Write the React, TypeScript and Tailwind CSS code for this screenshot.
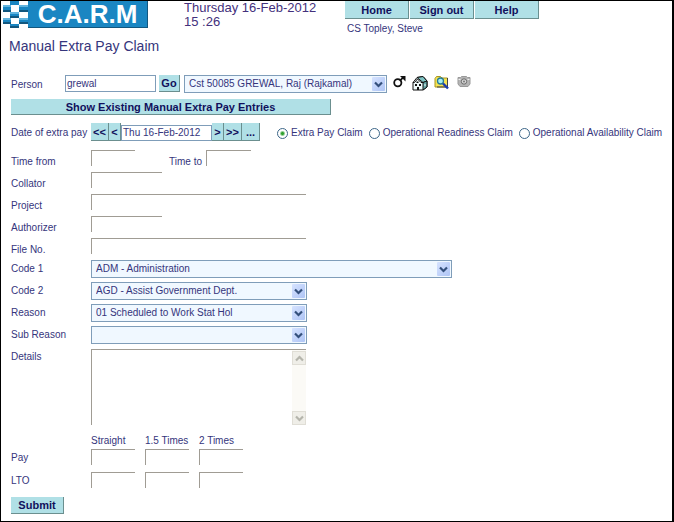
import type { ReactNode } from 'react'
import clsx from 'clsx'

const PERIODS = ['Straight', '1.5 Times', '2 Times']
const CLAIMS = ['Extra Pay Claim', 'Operational Readiness Claim', 'Operational Availability Claim']

function Button({ className, children, submit }: { className?: string; children: ReactNode; submit?: boolean }) {
  return (
    <button
      type={submit ? 'submit' : 'button'}
      className={clsx(
        'flex shrink-0 items-center justify-center border-r border-b border-[#6b8f8f] bg-[#b0e0e6] text-[11px] leading-4 font-bold text-[#10105c]',
        className,
      )}
    >
      {children}
    </button>
  )
}

function Chevron({ className, up }: { className?: string; up?: boolean }) {
  return (
    <svg viewBox="0 0 9 7" className={clsx('h-[7px] w-[9px]', className)} aria-hidden="true">
      <path d={up ? 'M1 5.5 4.5 2 8 5.5' : 'M1 1.5 4.5 5 8 1.5'} fill="none" stroke="currentColor" strokeWidth="2.2" />
    </svg>
  )
}

function Select({ id, label, value, className }: { id: string; label?: string; value: string; className?: string }) {
  return (
    <div className={clsx('relative h-[18px] shrink-0', className)}>
      <select
        id={id}
        aria-label={label}
        defaultValue={value}
        className="h-full w-full appearance-none border border-[#7f9db9] bg-[#f0f8ff] pr-5 pl-1 text-[10px] leading-4 outline-none"
      >
        <option>{value}</option>
      </select>
      <span className="pointer-events-none absolute top-0.5 right-0.5 bottom-0.5 flex w-[13px] items-center justify-center rounded-[1px] bg-linear-to-br from-[#d6e3ff] to-[#aec4f5] text-[#34507c]">
        <Chevron />
      </span>
    </div>
  )
}

function Field({ id, label, className }: { id: string; label?: string; className?: string }) {
  return <input id={id} aria-label={label} type="text" className={clsx('h-4 border-t border-l border-[#a09c94] px-1 outline-none', className)} />
}

function Row({ id, label, select, children }: { id: string; label: string; select?: boolean; children: ReactNode }) {
  return (
    <div className="flex h-[22px] items-start">
      <label htmlFor={id} className={clsx('w-20 shrink-0', select ? 'leading-[18px]' : 'leading-6')}>{label}</label>
      {children}
    </div>
  )
}

function Logo() {
  return (
    <div className="flex h-[27px] w-[146px] shrink-0 bg-[#1a86c2]">
      <svg viewBox="0 0 26 27" className="h-[27px] w-[26px] shrink-0" aria-hidden="true">
        <rect width="26" height="27" fill="#fff" />
        <g fill="#1a86c2">
          <path d="M8 0h9v4H8zM1 4h8v7H1zM17 4h9v7h-9zM8 11h9v6H8zM1 17h8v6H1zM17 17h9v6h-9zM8 23h9v4H8z" />
        </g>
        <path d="M1 9h8v2H1zM17 9h9v2h-9zM8 15h9v2H8zM1 21h8v2H1zM17 21h9v2h-9zM8 25h9v2H8z" fill="#12577f" />
        <path d="M1 4h8v2H1zM17 4h9v2h-9zM8 11h9v2H8zM1 17h8v2H1zM17 17h9v2h-9z" fill="#62b4de" />
      </svg>
      <span className="flex-1 border-r border-b border-[#12577f] text-center text-[26px] leading-[26px] font-bold text-white">C.A.R.M</span>
    </div>
  )
}

function PersonIcons() {
  return (
    <div className="flex items-start gap-1.5 pl-1.5">
      <svg viewBox="0 0 13 14" className="h-3.5 w-[13px]" role="img" aria-label="Male">
        <circle cx="4.8" cy="7.8" r="3.6" fill="none" stroke="#111" strokeWidth="1.8" />
        <path d="M7.5 5.200 10 2.700" fill="none" stroke="#111" strokeWidth="1.8" />
        <path d="M7 1h5.500v5.500z" fill="#111" />
      </svg>
      <svg viewBox="0 0 16 16" className="size-4" role="img" aria-label="Home address">
        <path d="M1 7.5 5 2.5l6-1 4 4.5V12l-4 3H1z" fill="#eefafa" stroke="#111" />
        <path d="M5 2.5 11 1.5l4 4.5-4 1.5z" fill="#7fc4c4" stroke="#111" />
        <path d="M11 7.5 15 6v6l-4 3z" fill="#65a8a8" stroke="#111" />
        <path d="M1 7.5h1.5L5.5 4 9 7.5h2" fill="none" stroke="#111" />
        <path d="M3 9h2v2H3zM7 9h2v2H7zM5 12h2v3H5zM4.5 6.5h2V8h-2z" fill="#111" />
        <path d="M12.5 9h1v2h-1z" fill="#e8f6f6" />
      </svg>
      <svg viewBox="0 0 15 15" className="size-[15px]" role="img" aria-label="Search files">
        <path d="M1 3.5 2.5 1.5h4L8 3h5.5v9H1z" fill="#f5e252" stroke="#a89520" />
        <path d="M13.5 3v9H3" fill="none" stroke="#444" />
        <circle cx="6.5" cy="6" r="3" fill="#a8eef4" stroke="#257b96" strokeWidth="1.3" />
        <path d="m9 8.5 5 5" stroke="#1b3cb0" strokeWidth="2.4" />
      </svg>
      <svg viewBox="0 0 14 14" className="ml-0.5 size-3.5" role="img" aria-label="Photo">
        <path d="M1 2.500h2.500l1-1h5l1 1H13V9l-2 2.500H3L1 9z" fill="#b4b4b4" stroke="#999" />
        <path d="M1.500 4h2v1h-2zM10.500 4h2v1h-2z" fill="#eee" />
        <circle cx="7" cy="6.500" r="2.700" fill="#d8d8d8" stroke="#6b6b6b" />
        <circle cx="7" cy="6.500" r="1" fill="#777" />
      </svg>
    </div>
  )
}

export default function App() {
  return (
    <div className="min-h-screen border border-r-2 border-black bg-white font-['Liberation_Sans',Arial,sans-serif] text-[10px] leading-4 text-[#35357c]">
      <header className="flex items-start pl-px">
        <Logo />
        <p className="ml-9 w-[161px] shrink-0 text-[13px] leading-[14px] text-[#43307c]">
          Thursday 16-Feb-2012
          <br />
          15 :26
        </p>
        <div>
          <nav className="flex gap-px">
            <Button className="h-[18px] w-16">Home</Button>
            <Button className="h-[18px] w-16">Sign out</Button>
            <Button className="h-[18px] w-16">Help</Button>
          </nav>
          <p className="pt-0.5 pl-0.5">CS Topley, Steve</p>
        </div>
      </header>

      <form className="px-2.5" onSubmit={e => e.preventDefault()}>
        <h1 className="-ml-0.5 text-sm leading-[18px]">Manual Extra Pay Claim</h1>

        <div className="mt-5 flex items-start">
          <label htmlFor="person" className="w-[54px] leading-5">Person</label>
          <input id="person" defaultValue="grewal" className="h-[17px] w-[91px] border border-[#7f9db9] pl-px outline-none" />
          <Button className="mr-1 ml-[3px] h-[17px] w-[21px]">Go</Button>
          <Select id="match" label="Matching person" value="Cst 50085 GREWAL, Raj (Rajkamal)" className="w-[203px]" />
          <PersonIcons />
        </div>

        <Button className="mt-1 h-4 w-80">Show Existing Manual Extra Pay Entries</Button>

        <div className="mt-2 flex items-start">
          <label htmlFor="date" className="w-20 shrink-0 leading-5 whitespace-nowrap">Date of extra pay</label>
          <Button className="h-[18px] w-[18px]">&lt;&lt;</Button>
          <Button className="h-[18px] w-3">&lt;</Button>
          <input id="date" defaultValue="Thu 16-Feb-2012" className="mt-0.5 h-4 w-[91px] border border-[#7f9db9] pl-px outline-none" />
          <Button className="h-[18px] w-3">&gt;</Button>
          <Button className="h-[18px] w-[18px]">&gt;&gt;</Button>
          <Button className="h-[18px] w-[18px]">...</Button>
          <div className="ml-[17px] flex gap-1.5 leading-5">
            {CLAIMS.map((claim, i) => (
              <label key={claim} className="flex items-center gap-[3px] whitespace-nowrap">
                <input
                  type="radio"
                  name="claim"
                  defaultChecked={i === 0}
                  className="size-[11px] appearance-none rounded-full border border-[#3c6688] bg-white checked:bg-[radial-gradient(circle,#2fa12f_1px,#fff_3px)]"
                />
                {claim}
              </label>
            ))}
          </div>
        </div>

        <div className="mt-[7px]">
          <Row id="from" label="Time from">
            <Field id="from" className="w-11" />
            <label htmlFor="to" className="w-[71px] pr-1 text-right leading-6">Time to</label>
            <Field id="to" className="w-[45px]" />
          </Row>
          <Row id="collator" label="Collator"><Field id="collator" className="w-[71px]" /></Row>
          <Row id="project" label="Project"><Field id="project" className="w-[215px]" /></Row>
          <Row id="authorizer" label="Authorizer"><Field id="authorizer" className="w-[71px]" /></Row>
          <Row id="file" label="File No."><Field id="file" className="w-[215px]" /></Row>
          <Row id="code1" label="Code 1" select><Select id="code1" value="ADM - Administration" className="w-[361px]" /></Row>
          <Row id="code2" label="Code 2" select><Select id="code2" value="AGD - Assist Government Dept." className="w-[216px]" /></Row>
          <Row id="reason" label="Reason" select><Select id="reason" value="01 Scheduled to Work Stat Hol" className="w-[216px]" /></Row>
          <Row id="sub" label="Sub Reason" select><Select id="sub" value="" className="w-[216px]" /></Row>
        </div>

        <div className="mt-px flex items-start">
          <label htmlFor="details" className="w-20">Details</label>
          <div className="flex h-[76px] w-[215px] border-t border-l border-[#a09c94]">
            <textarea id="details" className="min-w-0 flex-1 resize-none outline-none" />
            <div className="flex w-3.5 flex-col justify-between bg-[#fbfaf6] pt-px text-[#b5b5ac]">
              <span className="flex h-3.5 items-center justify-center border border-[#e0ded6] bg-[#efeee8]"><Chevron up /></span>
              <span className="flex h-3.5 items-center justify-center border border-[#e0ded6] bg-[#efeee8]"><Chevron /></span>
            </div>
          </div>
        </div>

        <table className="mt-2 table-fixed text-left">
          <thead>
            <tr className="h-4">
              <td className="w-20" />
              {PERIODS.map(p => <th key={p} scope="col" className="w-[54px] font-normal whitespace-nowrap">{p}</th>)}
            </tr>
          </thead>
          <tbody>
            {['Pay', 'LTO'].map(kind => (
              <tr key={kind} className="h-[23px]">
                <th scope="row" className="align-top leading-[18px] font-normal">{kind}</th>
                {PERIODS.map(p => (
                  <td key={p} className="align-top">
                    <Field id={`${kind}-${p}`} label={`${kind} ${p}`} className="block w-11" />
                  </td>
                ))}
              </tr>
            ))}
          </tbody>
        </table>

        <Button submit className="mt-0.5 h-[17px] w-[53px]">Submit</Button>
      </form>
    </div>
  )
}
